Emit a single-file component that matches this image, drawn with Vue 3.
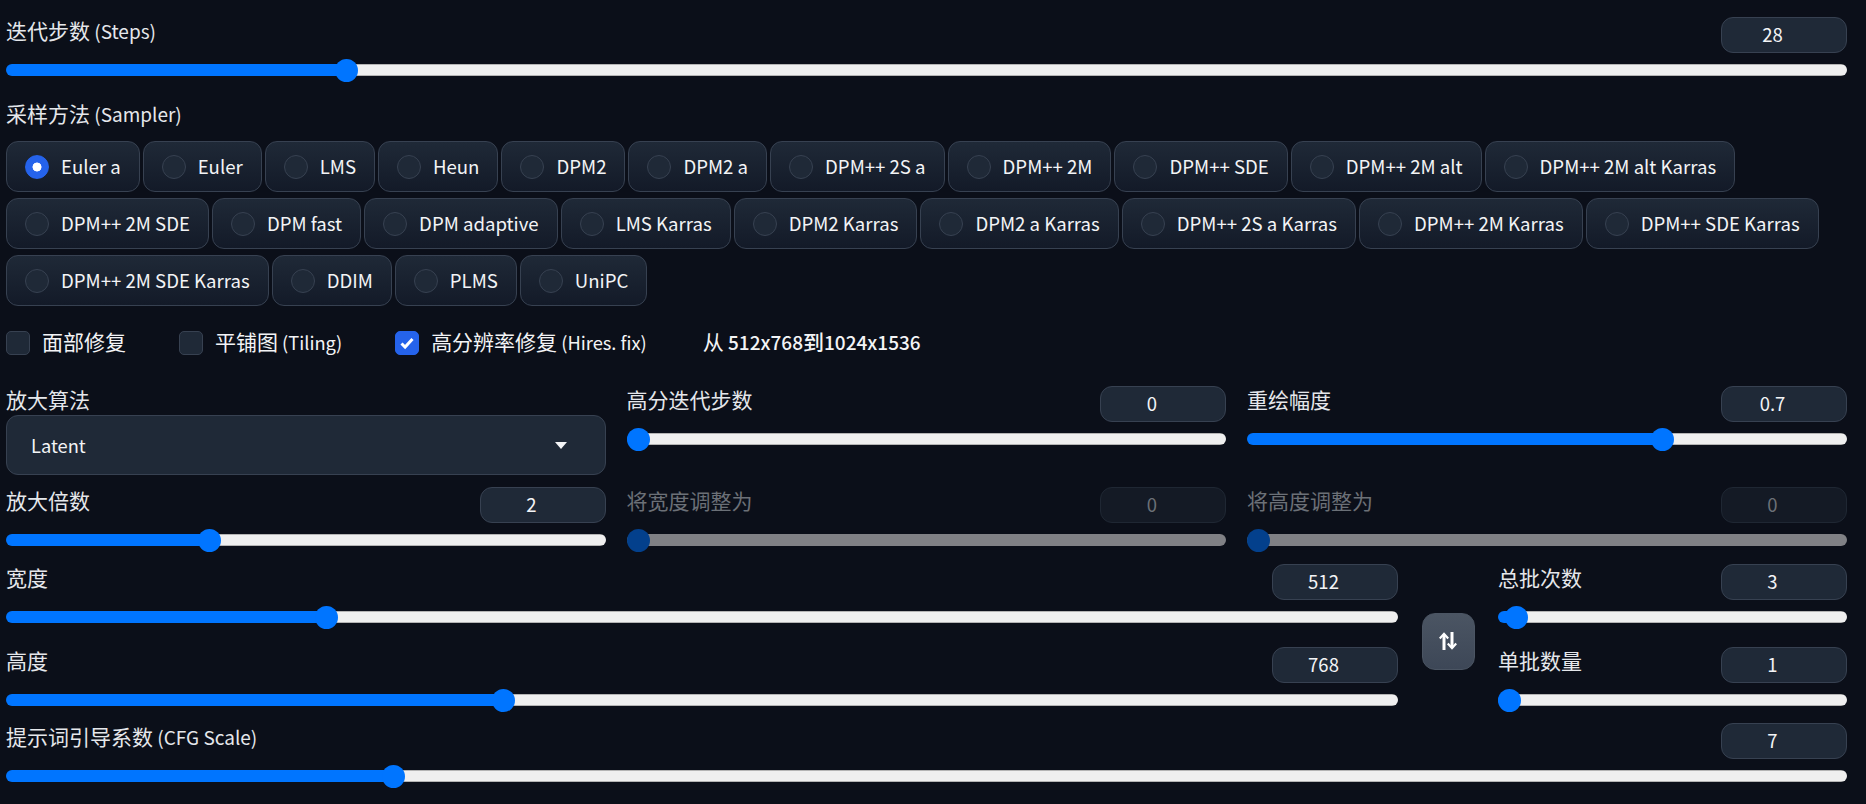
<template>
  <div class="page">
    <div class="field">
      <div class="head">
        <label><span class="zh">迭代步数</span> (Steps)</label>
        <input class="num" type="number" v-model.number="steps.value" />
      </div>
      <input class="range" type="range" :min="steps.min" :max="steps.max" v-model.number="steps.value" :style="fill(steps)" />
    </div>

    <div class="sampler-label"><span class="zh">采样方法</span> (Sampler)</div>
    <div class="chips">
      <label v-for="s in samplers" :key="s" class="chip">
        <input type="radio" :value="s" v-model="sampler" />
        <span class="chip-text">{{ s }}</span>
      </label>
    </div>

    <div class="checks">
      <label v-for="c in checks" :key="c.zh" class="check">
        <span class="box">
          <input type="checkbox" v-model="c.on" />
          <svg v-if="c.on" viewBox="0 0 24 24"><path d="M6.5 12.5l3.6 3.6 7.4-8" fill="none" stroke="#fff" stroke-width="3" /></svg>
        </span>
        <span class="check-text"><span class="zh">{{ c.zh }}</span>{{ c.en }}</span>
      </label>
      <div class="upscale-info"><span class="zh">从</span> <b>512x768<span class="zh">到</span>1024x1536</b></div>
    </div>

    <div class="hires-grid">
      <div class="dropdown-wrap">
        <div class="dd-label"><span class="zh">放大算法</span></div>
        <div class="dropdown">
          <span>Latent</span>
          <svg width="12" height="7" viewBox="0 0 12 7"><path d="M0 0h12L6 7z" fill="#f3f4f6" /></svg>
        </div>
      </div>
      <div v-for="f in hiresFields" :key="f.label" class="field" :class="{ off: f.off }">
        <div class="head">
          <label><span class="zh">{{ f.label }}</span></label>
          <input class="num" type="number" v-model.number="f.value" :disabled="f.off" />
        </div>
        <input class="range" type="range" :min="f.min" :max="f.max" :step="f.step" v-model.number="f.value" :disabled="f.off" :style="fill(f)" />
      </div>
    </div>

    <div class="size-row">
      <div class="size-col">
        <div v-for="f in sizeFields" :key="f.label" class="field">
          <div class="head">
            <label><span class="zh">{{ f.label }}</span></label>
            <input class="num" type="number" v-model.number="f.value" />
          </div>
          <input class="range" type="range" :min="f.min" :max="f.max" v-model.number="f.value" :style="fill(f)" />
        </div>
      </div>
      <button class="swap" @click="swap" aria-label="swap">
        <svg width="18" height="18" viewBox="0 0 18 18" fill="none" stroke="#fff">
          <path d="M5 2.5V18" stroke-width="3" />
          <path d="M.8 6.4L5 1.8l4.2 4.6" stroke-width="2.2" />
          <path d="M13 0v15.5" stroke-width="3" />
          <path d="M8.8 11.6l4.2 4.6 4.2-4.6" stroke-width="2.2" />
        </svg>
      </button>
      <div class="batch-col">
        <div v-for="f in batchFields" :key="f.label" class="field">
          <div class="head">
            <label><span class="zh">{{ f.label }}</span></label>
            <input class="num" type="number" v-model.number="f.value" />
          </div>
          <input class="range" type="range" :min="f.min" :max="f.max" v-model.number="f.value" :style="fill(f)" />
        </div>
      </div>
    </div>

    <div class="field cfg">
      <div class="head">
        <label><span class="zh">提示词引导系数</span> (CFG Scale)</label>
        <input class="num" type="number" v-model.number="cfg.value" />
      </div>
      <input class="range" type="range" :min="cfg.min" :max="cfg.max" v-model.number="cfg.value" :style="fill(cfg)" />
    </div>
  </div>
</template>

<script setup>
import { reactive, ref } from 'vue'

const samplers = [
  'Euler a', 'Euler', 'LMS', 'Heun', 'DPM2', 'DPM2 a', 'DPM++ 2S a', 'DPM++ 2M', 'DPM++ SDE',
  'DPM++ 2M alt', 'DPM++ 2M alt Karras', 'DPM++ 2M SDE', 'DPM fast', 'DPM adaptive', 'LMS Karras',
  'DPM2 Karras', 'DPM2 a Karras', 'DPM++ 2S a Karras', 'DPM++ 2M Karras', 'DPM++ SDE Karras',
  'DPM++ 2M SDE Karras', 'DDIM', 'PLMS', 'UniPC'
]
const sampler = ref('Euler a')

const checks = reactive([
  { zh: '面部修复', en: '', on: false },
  { zh: '平铺图', en: ' (Tiling)', on: false },
  { zh: '高分辨率修复', en: ' (Hires. fix)', on: true }
])

const steps = reactive({ value: 28, min: 1, max: 150 })
const cfg = reactive({ value: 7, min: 1, max: 30 })

const hiresFields = reactive([
  { label: '高分迭代步数', value: 0, min: 0, max: 150, step: 1 },
  { label: '重绘幅度', value: 0.7, min: 0, max: 1, step: 0.01 },
  { label: '放大倍数', value: 2, min: 1, max: 4, step: 0.05 },
  { label: '将宽度调整为', value: 0, min: 0, max: 2048, step: 8, off: true },
  { label: '将高度调整为', value: 0, min: 0, max: 2048, step: 8, off: true }
])
const sizeFields = reactive([
  { label: '宽度', value: 512, min: 64, max: 2048 },
  { label: '高度', value: 768, min: 64, max: 2048 }
])
const batchFields = reactive([
  { label: '总批次数', value: 3, min: 1, max: 100 },
  { label: '单批数量', value: 1, min: 1, max: 8 }
])

const fill = (f) => ({ '--p': (f.value - f.min) / (f.max - f.min) })

const swap = () => {
  const w = sizeFields[0].value
  sizeFields[0].value = sizeFields[1].value
  sizeFields[1].value = w
}
</script>

<style>
html, body {
  background: #0b0f19;
}
</style>

<style scoped>
.page {
  box-sizing: border-box;
  width: 1866px;
  height: 804px;
  overflow: hidden;
  padding: 17px 19.5px 0 6px;
  background: #0b0f19;
  color: #e5e7eb;
  font-family: "Noto Sans CJK SC", "Noto Sans", sans-serif;
  font-size: 19px;
}
.zh {
  font-size: 21px;
}
.field {
  display: flex;
  flex-direction: column;
  gap: 5px;
}
.head {
  display: flex;
  justify-content: space-between;
  align-items: flex-start;
  height: 36px;
}
.head label,
.dd-label,
.sampler-label {
  font-size: 19px;
  line-height: 26px;
  color: #e5e7eb;
}
.num {
  box-sizing: border-box;
  width: 126px;
  height: 36px;
  padding: 0 22px 2px 0;
  text-align: center;
  font: inherit;
  font-size: 18.5px;
  color: #f3f4f6;
  background: #1f2937;
  border: 1px solid #374151;
  border-radius: 12px;
  outline: none;
  -moz-appearance: textfield;
}
.num::-webkit-inner-spin-button,
.num::-webkit-outer-spin-button {
  -webkit-appearance: none;
  margin: 0;
}
.range {
  -webkit-appearance: none;
  appearance: none;
  display: block;
  width: 100%;
  height: 24px;
  margin: 0;
  background: transparent;
  --stop: calc(11.5px + (100% - 23px) * var(--p));
}
.range::-webkit-slider-runnable-track {
  height: 12px;
  border-radius: 6px;
  background:
    linear-gradient(to right, #0075ff var(--stop), transparent var(--stop)),
    linear-gradient(to bottom, #b4b4b4 1px, #efefef 1px, #efefef 11px, #b4b4b4 11px);
}
.range::-webkit-slider-thumb {
  -webkit-appearance: none;
  width: 23px;
  height: 23px;
  margin-top: -5.5px;
  border-radius: 50%;
  background: #0075ff;
}
.off label {
  color: #6b7077;
}
.off .num {
  color: #6b7077;
  background: #141a25;
  border-color: #1f2733;
}
.off .range::-webkit-slider-runnable-track {
  background: #808185;
}
.off .range::-webkit-slider-thumb {
  background: #03408c;
}
.sampler-label {
  margin-top: 18px;
  height: 27px;
}
.chips {
  display: flex;
  flex-wrap: wrap;
  gap: 6px 3px;
  margin-top: 14px;
}
.chip {
  box-sizing: border-box;
  display: flex;
  align-items: center;
  gap: 12px;
  height: 51px;
  padding: 0 18px;
  border: 1px solid #374151;
  border-radius: 12px;
  background: linear-gradient(to bottom, #1f2937, #131a28);
  color: #f3f4f6;
  font-size: 18.6px;
  white-space: nowrap;
}
.chip-text {
  padding-bottom: 2px;
}
.chip input {
  -webkit-appearance: none;
  appearance: none;
  flex: none;
  width: 24px;
  height: 24px;
  margin: 0;
  border-radius: 50%;
  border: 1px solid #374151;
  background: #1f2937;
}
.chip input:checked {
  border-color: #2563eb;
  background: radial-gradient(circle, #fff 0 4.2px, #2563eb 4.8px);
}
.checks {
  display: flex;
  align-items: center;
  margin-top: 25px;
  height: 24px;
}
.check {
  display: flex;
  align-items: center;
  gap: 12px;
  margin-right: 53px;
  color: #f3f4f6;
  font-size: 18.3px;
  white-space: nowrap;
}
.check-text {
  padding-bottom: 4px;
}
.box {
  display: grid;
  flex: none;
  width: 24px;
  height: 24px;
}
.box > * {
  grid-area: 1 / 1;
  pointer-events: none;
}
.box input {
  -webkit-appearance: none;
  appearance: none;
  box-sizing: border-box;
  width: 24px;
  height: 24px;
  margin: 0;
  border: 1px solid #374151;
  border-radius: 5px;
  background: #1f2937;
  pointer-events: auto;
}
.box input:checked {
  border-color: #2563eb;
  background: #2563eb;
}
.upscale-info {
  margin-left: 3px;
  padding-bottom: 4px;
  font-size: 19px;
  color: #f3f4f6;
  white-space: nowrap;
}
.upscale-info b {
  font-weight: 500;
}
.hires-grid {
  display: grid;
  grid-template-columns: repeat(3, 599.5px);
  column-gap: 21px;
  row-gap: 12px;
  margin-top: 31px;
}
.dd-label {
  height: 29px;
}
.dropdown {
  box-sizing: border-box;
  display: flex;
  justify-content: space-between;
  align-items: center;
  height: 60px;
  padding: 0 38px 0 24px;
  border: 1px solid #374151;
  border-radius: 12px;
  background: #1f2937;
  color: #f3f4f6;
  font-size: 18.3px;
}
.size-row {
  display: flex;
  align-items: center;
  margin-top: 12px;
}
.size-col {
  flex: none;
  width: 1391.5px;
  display: flex;
  flex-direction: column;
  gap: 18px;
}
.batch-col {
  flex: 1;
  min-width: 0;
  display: flex;
  flex-direction: column;
  gap: 18px;
}
.swap {
  flex: none;
  display: flex;
  align-items: center;
  justify-content: center;
  box-sizing: border-box;
  width: 53px;
  height: 57px;
  margin: 6px 23.5px 0 24px;
  padding: 0;
  border: 1px solid #4b5563;
  border-radius: 13px;
  background: linear-gradient(to bottom, #4b5563, #3d4757);
}
.cfg {
  margin-top: 11px;
}
</style>
